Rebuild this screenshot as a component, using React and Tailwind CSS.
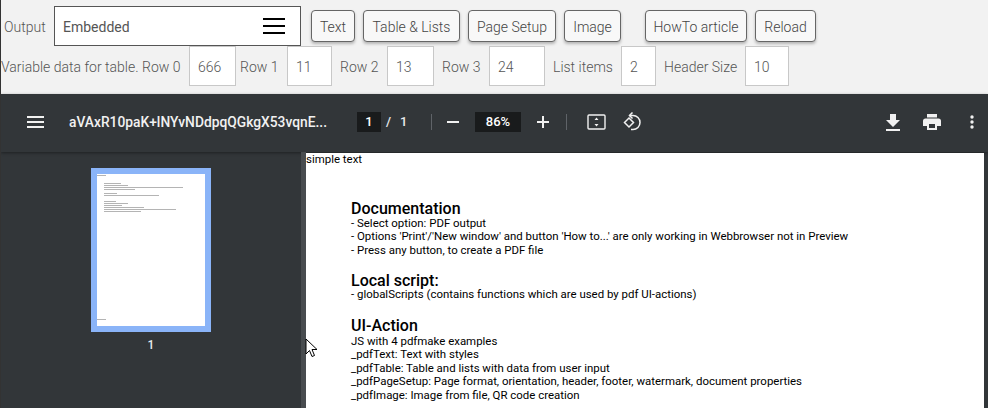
import React from "react";

const Btn = ({ children, className }) => (
  <button className={`h-8 rounded-[4px] border border-[#666] bg-[#f8f8f8] pt-[2px] text-[14px] font-light text-[#444] shadow-[0_2px_3px_rgba(0,0,0,0.25)] ${className}`}>
    {children}
  </button>
);

const Field = ({ value, className }) => (
  <div className={`h-10 border border-[#c8c8c8] bg-white pl-2 text-[14px] font-light leading-[40px] text-[#555] ${className}`}>
    {value}
  </div>
);

const Label = ({ children, className }) => (
  <span className={`pt-[2px] text-[14px] font-light text-[#555] ${className}`}>{children}</span>
);

const Doc = ({ children }) => <div className="text-[11.45px] leading-[13.5px]">{children}</div>;
const H = ({ children, className }) => <div className={`text-[16px] font-medium ${className}`}>{children}</div>;

const ThumbLine = ({ w, ml = "ml-[7px]", mt = "mt-0" }) => (
  <div className={`h-px bg-[#b4b4b4] ${ml} ${mt} ${w}`} />
);

export default function App() {
  return (
    <div className="h-[408px] w-[988px] overflow-hidden border-l border-[#333] bg-[#f2f2f2] font-['Roboto',sans-serif]">
      <div className="h-[94px] pt-[6px]">
        <div className="flex h-10 items-center">
          <Label className="ml-[3px] w-[50px]">Output</Label>
          <div className="flex h-10 w-[247px] items-center justify-between border border-[#555] bg-white pl-2 pr-[14px]">
            <span className="pt-[2px] text-[14px] text-[#555]">Embedded</span>
            <svg width="24" height="18" viewBox="0 0 24 18">
              <path d="M1 2h22M1 9h22M1 16h22" stroke="#000" strokeWidth="2" />
            </svg>
          </div>
          <Btn className="ml-[10px] w-[44px]">Text</Btn>
          <Btn className="ml-2 w-[97px]">Table &amp; Lists</Btn>
          <Btn className="ml-2 w-[88px]">Page Setup</Btn>
          <Btn className="ml-2 w-[57px]">Image</Btn>
          <Btn className="ml-6 w-[102px]">HowTo article</Btn>
          <Btn className="ml-2 w-[61px]">Reload</Btn>
        </div>
        <div className="flex h-10 items-center">
          <Label className="w-[188px] whitespace-nowrap">Variable data for table. Row 0</Label>
          <Field value="666" className="w-[47px]" />
          <Label className="ml-[4px] w-[47px]">Row 1</Label>
          <Field value="11" className="w-[45px]" />
          <Label className="ml-2 w-[47px]">Row 2</Label>
          <Field value="13" className="w-[47px]" />
          <Label className="ml-2 w-[47px]">Row 3</Label>
          <Field value="24" className="w-[56px]" />
          <Label className="ml-2 w-[68px]">List items</Label>
          <Field value="2" className="w-[35px]" />
          <Label className="ml-2 w-[81px]">Header Size</Label>
          <Field value="10" className="w-[44px]" />
        </div>
      </div>

      <div className="h-[314px] bg-[#323639] text-white">
        <div className="flex h-[58px] items-center pb-[2px] shadow-[0_1px_3px_rgba(0,0,0,0.4)]">
          <svg className="ml-[26px]" width="17" height="14" viewBox="0 0 17 14" fill="#f1f1f1">
            <path d="M0 1h17v2H0zM0 6h17v2H0zM0 11h17v2H0z" />
          </svg>
          <span className="ml-[25px] w-[288px] whitespace-nowrap text-[13.8px] font-medium text-[#f1f1f1]">aVAxR10paK+lNYvNDdpqQGkgX53vqnE...</span>
          <span className="h-5 w-6 bg-[#191b1c] text-center text-[13px] font-medium leading-5">1</span>
          <span className="w-[50px] whitespace-nowrap pl-[5px] text-[13px] font-medium text-[#e8eaed]">/<span className="ml-[9px]">1</span></span>
          <div className="h-4 w-px bg-[#5f6368]" />
          <svg className="ml-[14px]" width="14" height="14" viewBox="0 0 14 14" fill="#f1f1f1"><path d="M1 6h12v2H1z" /></svg>
          <span className="ml-[15px] h-5 w-[46px] bg-[#191b1c] text-center text-[13px] font-medium leading-5">86%</span>
          <svg className="ml-[15px]" width="14" height="14" viewBox="0 0 14 14" fill="#f1f1f1"><path d="M6 1h2v5h5v2H8v5H6V8H1V6h5z" /></svg>
          <div className="ml-4 h-4 w-px bg-[#5f6368]" />
          <svg className="ml-5" width="19" height="16" viewBox="0 0 19 16" fill="none" stroke="#f1f1f1" strokeWidth="1.4">
            <rect x="1" y="1" width="17" height="14" rx="1" />
            <path d="M9.500 3.500l2 2.400h-4zM9.500 12.500l2-2.400h-4z" fill="#f1f1f1" stroke="none" />
          </svg>
          <svg className="ml-[17px]" width="18" height="20" viewBox="0 0 18 20" fill="none" stroke="#f1f1f1" strokeWidth="1.5">
            <path d="M1.500 10.500L6 6l4.500 4.500L6 15z" />
            <path d="M6.500 3.500h3.500a6.800 6.800 0 0 1 0 14h-2" />
            <path d="M9.500 0.500L6.500 3.500l3 3" />
          </svg>
          <svg className="ml-[245px]" width="14" height="17" viewBox="0 0 14 17" fill="#f1f1f1">
            <path d="M4 0h6v6h4l-7 7-7-7h4zM0 15h14v2H0z" />
          </svg>
          <svg className="ml-[23px]" width="18" height="16" viewBox="0 0 18 16" fill="#f1f1f1">
            <path d="M4 0h10v3.500H4zM2.500 4.500h13A2.500 2.500 0 0 1 18 7v5h-4v4H4v-4H0V7a2.500 2.500 0 0 1 2.500-2.500zM6 10v4h6v-4z" fillRule="evenodd" />
          </svg>
          <svg className="ml-[29px]" width="4" height="14" viewBox="0 0 4 14" fill="#f1f1f1">
            <circle cx="2" cy="2" r="1.700" /><circle cx="2" cy="7" r="1.700" /><circle cx="2" cy="12" r="1.700" />
          </svg>
        </div>

        <div className="flex h-[256px]">
          <div className="flex w-[300px] flex-col items-center pt-[16px]">
            <div className="h-[164px] w-[120px] border-[6px] border-[#8ab4f8] bg-white pt-[1px]">
              <ThumbLine w="w-[9px]" ml="ml-0" />
              <ThumbLine w="w-[17px]" mt="mt-[7px]" />
              <ThumbLine w="w-[24px]" mt="mt-[1px]" />
              <ThumbLine w="w-[79px]" mt="mt-[1px]" />
              <ThumbLine w="w-[31px]" mt="mt-[1px]" />
              <ThumbLine w="w-[13px]" mt="mt-[3px]" />
              <ThumbLine w="w-[55px]" mt="mt-[1px]" />
              <ThumbLine w="w-[12px]" mt="mt-[5px]" />
              <ThumbLine w="w-[24px]" mt="mt-[1px]" />
              <ThumbLine w="w-[18px]" mt="mt-[1px]" />
              <ThumbLine w="w-[40px]" mt="mt-[1px]" />
              <ThumbLine w="w-[72px]" mt="mt-[1px]" />
              <ThumbLine w="w-[37px]" mt="mt-[1px]" />
              <ThumbLine w="w-[9px]" ml="ml-0" mt="mt-[107px]" />
            </div>
            <div className="mt-[6px] text-[12px] font-medium leading-[14px] text-[#e8eaed]">1</div>
          </div>
          <div className="w-[5px] bg-[#484c4f]" />
          <div className="relative mt-px w-[678px] bg-white text-black">
            <Doc>simple text</Doc>
            <div className="pl-[45px] pt-[33px]">
              <H className="leading-[17px]">Documentation</H>
              <Doc>- Select option: PDF output</Doc>
              <Doc>- Options 'Print'/'New window' and button 'How to...' are only working in Webbrowser not in Preview</Doc>
              <Doc>- Press any button, to create a PDF file</Doc>
              <H className="mt-[17px] leading-[14px]">Local script:</H>
              <Doc>- globalScripts (contains functions which are used by pdf UI-actions)</Doc>
              <H className="mt-[14px] leading-[19px]">UI-Action</H>
              <Doc>JS with 4 pdfmake examples</Doc>
              <Doc>_pdfText: Text with styles</Doc>
              <Doc>_pdfTable: Table and lists with data from user input</Doc>
              <Doc>_pdfPageSetup: Page format, orientation, header, footer, watermark, document properties</Doc>
              <Doc>_pdfImage: Image from file, QR code creation</Doc>
            </div>
            <svg className="absolute left-[-1px] top-[185px]" width="13" height="20" viewBox="0 0 13 20">
              <path d="M1 1v15l3.500-3.500 2.500 6 2.500-1-2.500-6H12z" fill="#fff" stroke="#000" strokeWidth="1" />
            </svg>
          </div>
        </div>
      </div>
    </div>
  );
}
